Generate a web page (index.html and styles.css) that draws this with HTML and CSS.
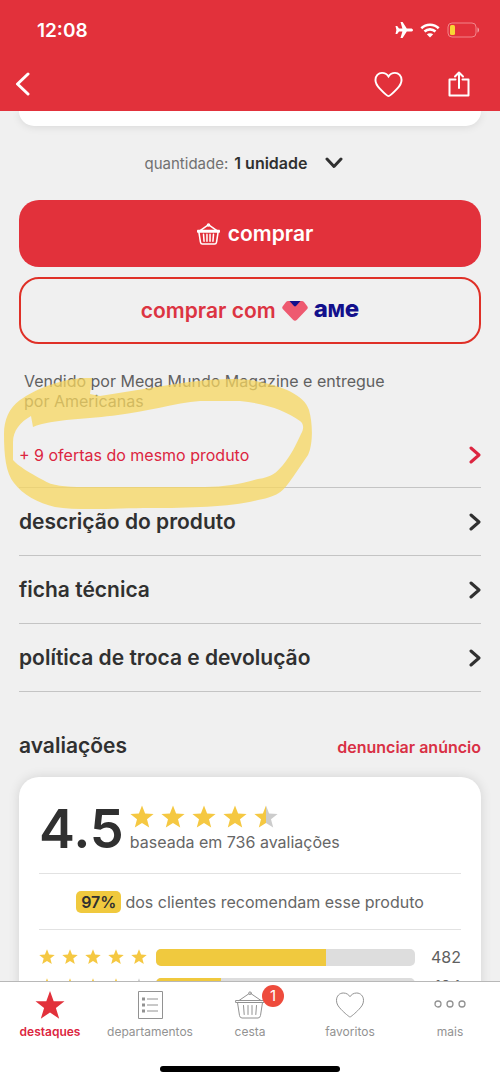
FILE: index.html
```html
<!DOCTYPE html>
<html lang="pt-BR">
<head>
<meta charset="utf-8">
<meta name="viewport" content="width=device-width, initial-scale=1">
<title>Produto</title>
<link rel="stylesheet" href="styles.css">
</head>
<body>
<svg class="defs" aria-hidden="true">
  <defs>
    <linearGradient id="half"><stop offset="50%" stop-color="#f5c842"/><stop offset="50%" stop-color="#cccccc"/></linearGradient>
    <symbol id="star" viewBox="0 0 24 24"><path d="M12 0.500L15.100 8.400L23.600 8.900L17 14.300L19.200 22.500L12 17.900L4.800 22.500L7 14.300L0.400 8.900L8.900 8.400Z"/></symbol>
    <symbol id="chev" viewBox="0 0 12 18"><path d="M2 2L10 9L2 16" fill="none" stroke="currentColor" stroke-width="3" stroke-linecap="round" stroke-linejoin="round"/></symbol>
    <symbol id="heart" viewBox="0 0 30 27"><path d="M15 25.500C14.300 25.500 9.500 21.500 6 17.800C3.200 14.800 1.500 12.500 1.500 8.800C1.500 4.600 4.500 1.500 8.300 1.500C11.400 1.500 13.600 3 15 5.200C16.400 3 18.600 1.500 21.700 1.500C25.500 1.500 28.500 4.600 28.500 8.800C28.500 12.500 26.800 14.800 24 17.800C20.500 21.500 15.700 25.500 15 25.500Z" fill="none" stroke="currentColor"/></symbol>
    <symbol id="basket" viewBox="0 0 30 28"><g fill="none" stroke="currentColor" stroke-linejoin="round" stroke-linecap="round"><path d="M1 9.500H29V11.500H1Z"/><path d="M2.500 11.500L4.500 24.500Q5 27 7 27H23Q25 27 25.500 24.500L27.500 11.500"/><path d="M4 9.500L13.800 2.800M26 9.500L16.200 2.800M8.500 14.500L9.200 23.500M13 14.500V23.500M17 14.500V23.500M21.500 14.500L20.800 23.500"/><circle cx="15" cy="2.200" r="1.300"/></g></symbol>
  </defs>
</svg>
<div class="app">
  <header class="top">
    <div class="status">
      <time class="clock">12:08</time>
      <div class="signals">
        <svg class="plane" viewBox="0 0 18 16"><path d="M18 8C18 9 17 9.600 15.800 9.600H11.800L7.600 16H5.500L7.400 9.600H4L2.200 12H0.500L1.400 8L0.500 4H2.200L4 6.400H7.400L5.500 0H7.600L11.800 6.400H15.800C17 6.400 18 7 18 8Z"/></svg>
        <svg class="wifi" viewBox="0 0 20 15"><path d="M1.300 5.300C6.200 0.600 13.800 0.600 18.700 5.300M4.500 8.500C7.600 5.600 12.400 5.600 15.500 8.500"/><path class="dot" d="M10 14.500L6.800 11.300C8.600 9.800 11.400 9.800 13.200 11.300Z"/></svg>
        <svg class="battery" viewBox="0 0 33 16"><rect x="1" y="1" width="28" height="14" rx="4" fill="none" stroke="#f2858a"/><rect x="3" y="3" width="5" height="10" rx="1.500" fill="#f8d535"/><path d="M30.500 5.500C32.500 6 32.500 10 30.500 10.500Z" fill="#f2a0a4"/></svg>
      </div>
    </div>
    <div class="toolbar">
      <button class="icon-btn" aria-label="voltar"><svg class="back" viewBox="0 0 15 24"><path d="M13 2L2.500 12L13 22"/></svg></button>
      <div class="tools">
        <button class="icon-btn" aria-label="favoritar"><svg class="fav"><use href="#heart"/></svg></button>
        <button class="icon-btn" aria-label="compartilhar"><svg class="share" viewBox="0 0 22 26"><path d="M7.500 8.500H1.500V24.500H20.500V8.500H14.500M11 17V2M7 5.500L11 1.500L15 5.500"/></svg></button>
      </div>
    </div>
  </header>

  <main class="content">
    <div class="gallery-end"></div>
    <button class="quantity"><span>quantidade:</span><strong>1 unidade</strong><svg class="down" viewBox="0 0 18 12"><path d="M2 2L9 9.500L16 2"/></svg></button>
    <div class="actions">
      <button class="buy"><svg class="buy-icon"><use href="#basket"/></svg>comprar</button>
      <button class="buy-ame"><span>comprar com</span><svg class="gem" viewBox="0 0 26 20"><path d="M6 0H20Q21 0 22 1L25.400 5.500Q26.300 7 25 8.300L15 18.700Q13 20.600 11 18.700L1 8.300Q-0.300 7 0.600 5.500L4 1Q5 0 6 0Z" fill="#ee5a70"/><path d="M7.500 0H18.500L14 5Q13 5.900 12 5Z" fill="#13108c"/></svg><span class="ame">a<span class="ame-m">M</span>e</span></button>
    </div>
    <section class="offers">
      <p class="seller">Vendido por Mega Mundo Magazine e entregue por Americanas</p>
      <a class="row more" href="#ofertas">+ 9 ofertas do mesmo produto<svg class="chev"><use href="#chev"/></svg></a>
      <svg class="marker" viewBox="0 370 320 145"><path fill-rule="evenodd" d="M92 378C65 377 37 388 20 400C9 408 4 420 4 434C4 456 6 473 14 483C23 495 38 503 55 507C80 511 120 508 150 508C190 508 230 507 258 500C280 496 284 490 293 477L308 455C313 445 313 424 309 410C304 394 280 385 250 380C225 377 195 381 175 384L100 396L90 394ZM33 427L31 416C20 422 13 431 13 442V460C18 466 30 473 43 480C52 486 65 487 84 487L205 487C225 487 240 484 258 479C272 477 276 473 283 465C291 455 296 445 301 434C304 429 304 424 300 421C286 411 268 404 240 401H200C175 403 145 412 118 415C90 419 52 419 33 427Z"/></svg>
    </section>
    <nav class="sections">
      <a class="row" href="#descricao">descrição do produto<svg class="chev"><use href="#chev"/></svg></a>
      <a class="row" href="#ficha">ficha técnica<svg class="chev"><use href="#chev"/></svg></a>
      <a class="row" href="#politica">política de troca e devolução<svg class="chev"><use href="#chev"/></svg></a>
    </nav>
    <section class="reviews">
      <div class="reviews-head"><h2>avaliações</h2><a href="#denunciar">denunciar anúncio</a></div>
      <div class="card">
        <div class="summary">
          <strong class="score">4.5</strong>
          <div class="summary-text">
            <div class="stars big"><svg><use href="#star"/></svg><svg><use href="#star"/></svg><svg><use href="#star"/></svg><svg><use href="#star"/></svg><svg viewBox="0 0 24 24"><path fill="url(#half)" d="M12 0.500L15.100 8.400L23.600 8.900L17 14.300L19.200 22.500L12 17.900L4.800 22.500L7 14.300L0.400 8.900L8.900 8.400Z"/></svg></div>
            <p>baseada em 736 avaliações</p>
          </div>
        </div>
        <p class="recommend"><strong>97%</strong> dos clientes recomendam esse produto</p>
        <div class="bars">
          <div class="bar-row"><div class="stars"><svg><use href="#star"/></svg><svg><use href="#star"/></svg><svg><use href="#star"/></svg><svg><use href="#star"/></svg><svg><use href="#star"/></svg></div><div class="track"><div class="fill" style="width:65.500%"></div></div><span class="count">482</span></div>
          <div class="bar-row"><div class="stars"><svg><use href="#star"/></svg><svg><use href="#star"/></svg><svg><use href="#star"/></svg><svg><use href="#star"/></svg><svg class="off"><use href="#star"/></svg></div><div class="track"><div class="fill" style="width:25%"></div></div><span class="count">184</span></div>
        </div>
      </div>
    </section>
  </main>

  <footer class="tabs">
    <nav class="tab-list">
      <a class="tab active" href="#destaques"><svg class="tab-star" viewBox="0 0 30 28"><path d="M15 0L18.700 10.200H29.500L20.900 16.900L24.200 27.700L15 21.400L5.800 27.700L9.100 16.900L0.500 10.200H11.300Z"/></svg>destaques</a>
      <a class="tab" href="#departamentos"><svg class="tab-list-icon" viewBox="0 0 25 28"><path d="M0.500 0.500H24.500V27.500H0.500ZM9 8H20M9 14H20M9 20H20" fill="none" stroke="currentColor"/><path d="M4 6.500H7V9.500H4ZM4 12.500H7V15.500H4ZM4 18.500H7V21.500H4Z"/></svg>departamentos</a>
      <a class="tab" href="#cesta"><span class="basket-wrap"><svg class="tab-basket"><use href="#basket"/></svg><span class="badge">1</span></span>cesta</a>
      <a class="tab" href="#favoritos"><svg class="tab-heart"><use href="#heart"/></svg>favoritos</a>
      <a class="tab" href="#mais"><svg class="dots" viewBox="0 0 32 28"><g fill="none" stroke="currentColor" stroke-width="1.300"><circle cx="4" cy="13" r="3"/><circle cx="16" cy="13" r="3"/><circle cx="28" cy="13" r="3"/></g></svg>mais</a>
    </nav>
    <div class="home"></div>
  </footer>
</div>
</body>
</html>
```
FILE: styles.css
```css
* { box-sizing: border-box; }
body, p, h2 { margin: 0; }
body { font-family: Inter, "Liberation Sans", sans-serif; color: #303030; background: #f0f0f0; }
button { font: inherit; border: 0; background: none; padding: 0; color: inherit; }
a { color: inherit; text-decoration: none; }
svg { display: block; flex: none; }
.defs { position: absolute; width: 0; height: 0; }
.app { height: 100vh; display: flex; flex-direction: column; }

.top { flex: none; background: #e2313b; color: #fff; }
.status { height: 60px; padding: 0 20px 0 37px; display: flex; align-items: center; justify-content: space-between; }
.clock { font-size: 19px; font-weight: 600; }
.signals { display: flex; align-items: center; gap: 7px; }
.plane { width: 18px; height: 16px; fill: #fff; }
.wifi { width: 20px; height: 15px; fill: none; stroke: #fff; stroke-width: 2.600; }
.wifi .dot { fill: #fff; stroke: none; }
.battery { width: 33px; height: 16px; }
.toolbar { height: 51px; padding: 0 30px 3px 15px; display: flex; align-items: center; justify-content: space-between; }
.tools { display: flex; align-items: center; gap: 45px; }
.back { width: 15px; height: 24px; fill: none; stroke: #fff; stroke-width: 3; stroke-linecap: round; stroke-linejoin: round; }
.fav { width: 29px; height: 27px; stroke-width: 2; }
.share { width: 22px; height: 26px; fill: none; stroke: #fff; stroke-width: 2; stroke-linecap: round; stroke-linejoin: round; }

.content { flex: 1; min-height: 0; overflow: hidden; padding: 0 19px; display: flex; flex-direction: column; }
.content > * { flex: none; }
.gallery-end { height: 15px; background: #fff; border-radius: 0 0 20px 20px; box-shadow: 0 1px 8px #0000001a; }
.quantity { align-self: center; height: 74px; padding-right: 12px; display: flex; align-items: center; gap: 6px; font-size: 16px; color: #707070; }
.quantity span { font-size: 15px; }
.quantity strong { color: #303030; font-weight: 600; }
.down { width: 18px; height: 12px; margin-left: 12px; fill: none; stroke: #303030; stroke-width: 3; stroke-linecap: round; stroke-linejoin: round; }
.actions { display: grid; gap: 10px; }
.buy, .buy-ame { height: 67px; border-radius: 20px; display: flex; align-items: center; justify-content: center; font-size: 21px; font-weight: 600; }
.buy { background: #e2313b; color: #fff; gap: 8px; padding-left: 10px; }
.buy-icon { width: 23px; height: 22px; stroke-width: 2; }
.buy-ame { border: 2px solid #df3027; color: #dc3442; gap: 6px; }
.gem { width: 26px; height: 20px; }
.ame { color: #13108c; font-size: 24px; line-height: 24px; font-weight: 800; padding-bottom: 2px; }
.ame-m { font-size: 18px; }
.offers { position: relative; padding-top: 27px; }
.seller { padding: 0 80px 0 5px; font-size: 16px; line-height: 20px; color: #606060; }
.row { height: 68px; border-bottom: 1px solid #c4c4c4; display: flex; align-items: center; justify-content: space-between; font-size: 21px; font-weight: 600; }
.row.more { height: 77px; padding-top: 12px; font-size: 16px; font-weight: 400; color: #dc2540; }
.chev { width: 12px; height: 18px; }
.marker { position: absolute; left: -19px; top: 26px; width: 320px; height: 145px; fill: #f7d760; opacity: 0.750; pointer-events: none; }
.reviews-head { height: 85px; padding-top: 21px; display: flex; align-items: center; justify-content: space-between; }
.reviews-head h2 { font-size: 21px; font-weight: 600; }
.reviews-head a { font-size: 16px; font-weight: 600; color: #d93045; padding-top: 4px; }
.card { background: #fff; border-radius: 20px; padding: 20px 20px 40px; box-shadow: 0 0 12px #0000001f; }
.summary { height: 77px; padding-bottom: 4px; display: flex; align-items: center; gap: 6px; border-bottom: 1px solid #e2e2e2; }
.score { font-size: 54px; line-height: 60px; font-weight: 600; padding-bottom: 8px; }
.summary-text { padding-bottom: 6px; }
.summary-text p { font-size: 16px; line-height: 26px; color: #666; }
.stars { display: flex; gap: 7px; fill: #f5c842; }
.stars svg { width: 16px; height: 16px; }
.stars .off { fill: #ccc; }
.stars.big svg { width: 24px; height: 24px; }
.recommend { height: 56px; border-bottom: 1px solid #e2e2e2; display: flex; align-items: center; justify-content: center; gap: 4px; font-size: 16px; color: #666; }
.recommend strong { background: #f0c93e; color: #303030; border-radius: 5px; padding: 0 5px; line-height: 22px; font-weight: 600; }
.bars { padding-top: 15px; display: grid; gap: 5px; }
.bar-row { display: flex; align-items: center; height: 24px; }
.track { flex: 1; height: 17px; margin-left: 9px; border-radius: 5px; background: #ddd; overflow: hidden; }
.fill { height: 100%; background: #f0c93e; }
.count { width: 46px; text-align: right; font-size: 16px; color: #606060; }

.tabs { flex: none; background: #fff; border-top: 1px solid #b8b8b8; }
.tab-list { height: 84px; padding-top: 9px; display: grid; grid-template-columns: repeat(5, 1fr); }
.tab { display: flex; flex-direction: column; align-items: center; gap: 3px; font-size: 12px; line-height: 20px; color: #929292; fill: currentColor; }
.tab.active { color: #dc2540; font-weight: 600; }
.tab-star { width: 30px; height: 28px; fill: #e2313b; }
.tab-list-icon { width: 25px; height: 28px; }
.basket-wrap { position: relative; }
.tab-basket { width: 30px; height: 28px; }
.badge { position: absolute; left: 27px; top: -6px; width: 22px; height: 22px; border-radius: 50%; background: #ee4b3c; color: #fff; font-size: 15px; line-height: 22px; text-align: center; }
.tab-heart { width: 30px; height: 28px; }
.dots { width: 32px; height: 28px; }
.home { width: 36%; height: 6px; margin: 0 auto 10px; border-radius: 3px; background: #000; }
```
